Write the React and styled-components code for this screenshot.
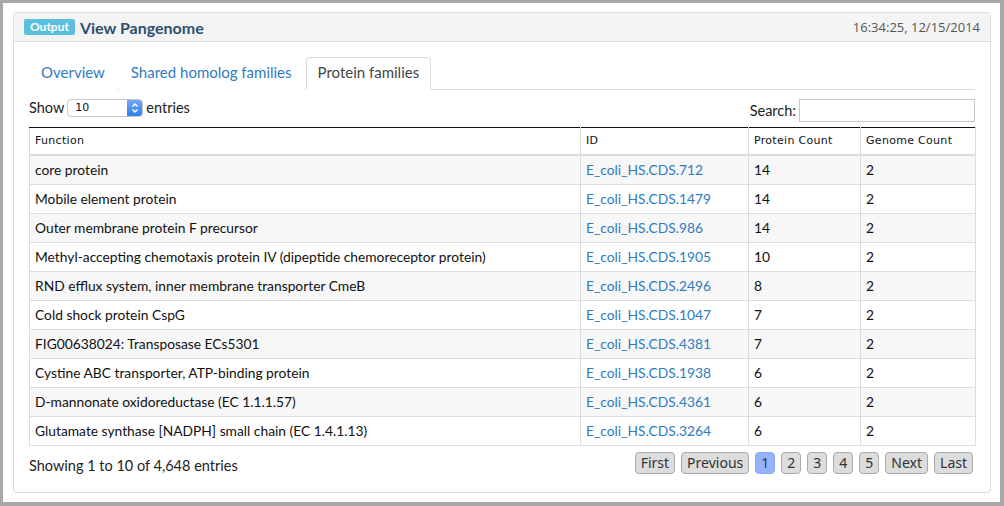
import React from 'react'
import styled, { createGlobalStyle } from 'styled-components'

const GlobalStyle = createGlobalStyle`
  html, body {
    margin: 0;
    padding: 0;
    background: #fff;
  }
  body {
    font-family: Lato, "Open Sans", sans-serif;
    color: #222;
  }
`

const rows = [
  { fn: 'core protein', id: 'E_coli_HS.CDS.712', proteins: 14, genomes: 2 },
  { fn: 'Mobile element protein', id: 'E_coli_HS.CDS.1479', proteins: 14, genomes: 2 },
  { fn: 'Outer membrane protein F precursor', id: 'E_coli_HS.CDS.986', proteins: 14, genomes: 2 },
  { fn: 'Methyl-accepting chemotaxis protein IV (dipeptide chemoreceptor protein)', id: 'E_coli_HS.CDS.1905', proteins: 10, genomes: 2 },
  { fn: 'RND efflux system, inner membrane transporter CmeB', id: 'E_coli_HS.CDS.2496', proteins: 8, genomes: 2 },
  { fn: 'Cold shock protein CspG', id: 'E_coli_HS.CDS.1047', proteins: 7, genomes: 2 },
  { fn: 'FIG00638024: Transposase ECs5301', id: 'E_coli_HS.CDS.4381', proteins: 7, genomes: 2 },
  { fn: 'Cystine ABC transporter, ATP-binding protein', id: 'E_coli_HS.CDS.1938', proteins: 6, genomes: 2 },
  { fn: 'D-mannonate oxidoreductase (EC 1.1.1.57)', id: 'E_coli_HS.CDS.4361', proteins: 6, genomes: 2 },
  { fn: 'Glutamate synthase [NADPH] small chain (EC 1.4.1.13)', id: 'E_coli_HS.CDS.3264', proteins: 6, genomes: 2 },
]

const pages = ['First', 'Previous', '1', '2', '3', '4', '5', 'Next', 'Last']

const Window = styled.div`
  box-sizing: border-box;
  width: 1004px;
  height: 506px;
  border: 3px solid #a8a8a8;
  border-right-width: 4px;
  border-bottom-width: 4px;
  padding: 9px 9px 9px 10px;
`

const Panel = styled.div`
  box-sizing: border-box;
  width: 978px;
  height: 481px;
  border: 1px solid #dcdcdc;
  border-radius: 4px;
  background: #fff;
`

const PanelHeader = styled.div`
  height: 28px;
  display: flex;
  align-items: center;
  justify-content: space-between;
  padding: 0 10px;
  background: #f4f4f4;
  border-bottom: 1px solid #dcdcdc;
  border-radius: 4px 4px 0 0;
`

const Title = styled.div`
  display: flex;
  align-items: center;
  gap: 5px;
  font-weight: 700;
  font-size: 16px;
  color: #2c4f70;
`

const Label = styled.span`
  display: inline-block;
  background: #5bc0de;
  color: #fff;
  font-size: 12px;
  font-weight: 700;
  line-height: 16px;
  padding: 0 6px;
  border-radius: 2px;
`

const Stamp = styled.div`
  font-family: "Open Sans", sans-serif;
  font-size: 13px;
  color: #555;
`

const Body = styled.div`
  padding: 15px 15px 0 15px;
`

const Tabs = styled.div`
  display: flex;
  height: 32px;
  border-bottom: 1px solid #dcdcdc;
`

const Tab = styled.div`
  box-sizing: border-box;
  display: flex;
  align-items: center;
  height: 33px;
  padding: 0 11px 3px;
  margin-right: 2px;
  font-size: 15px;
  color: ${p => (p.$active ? '#444' : '#2e7bbf')};
  background: #fff;
  border: 1px solid ${p => (p.$active ? '#dcdcdc' : 'transparent')};
  border-bottom-color: ${p => (p.$active ? '#fff' : 'transparent')};
  border-radius: 4px 4px 0 0;
`

const Controls = styled.div`
  display: flex;
  justify-content: space-between;
  align-items: flex-start;
  margin-top: 9px;
  height: 23px;
  font-size: 14.5px;
`

const Length = styled.div`
  display: flex;
  align-items: center;
  gap: 3px;
  height: 17px;
`

const Select = styled.div`
  box-sizing: border-box;
  display: flex;
  align-items: center;
  width: 76px;
  height: 18px;
  border: 1px solid #c8c8c8;
  border-radius: 4px;
  overflow: hidden;
  font-family: "DejaVu Sans", sans-serif;
  font-size: 11px;
  color: #111;
  background: #fff;
`

const SelectValue = styled.span`
  flex: 1;
  padding-left: 7px;
`

const Stepper = styled.span`
  display: flex;
  align-items: center;
  justify-content: center;
  width: 15px;
  height: 100%;
  background: linear-gradient(#6fa9f6, #2f7ef0);
`

const SearchBox = styled.label`
  display: flex;
  align-items: center;
  gap: 3px;
`

const SearchInput = styled.input`
  box-sizing: border-box;
  width: 176px;
  height: 23px;
  border: 1px solid #c8c8c8;
  margin: 0;
  padding: 0 4px;
`

const Table = styled.table`
  width: 946px;
  margin-top: 5px;
  border-collapse: collapse;
  table-layout: fixed;
`

const Th = styled.th`
  box-sizing: border-box;
  height: 27px;
  padding: 0 5px;
  text-align: left;
  font-family: "DejaVu Sans", sans-serif;
  font-weight: 400;
  font-size: 11px;
  letter-spacing: 0.3px;
  color: #111;
  border-top: 1px solid #111;
  border-bottom: 2px solid #dcdcdc;
  border-left: 1px solid #dcdcdc;
  border-right: 1px solid #dcdcdc;
  width: ${p => p.$w}px;
`

const Tr = styled.tr`
  background: ${p => (p.$odd ? '#f7f7f7' : '#fff')};
`

const Td = styled.td`
  height: 28px;
  padding: 0 5px;
  font-size: 13.8px;
  color: #111;
  border: 1px solid #dcdcdc;
  white-space: nowrap;
  overflow: hidden;
`

const IdLink = styled.a`
  color: #2e7bbf;
  text-decoration: none;
`

const Footer = styled.div`
  display: flex;
  justify-content: space-between;
  align-items: center;
  margin-top: 6px;
  padding-right: 2px;
  height: 22px;
  font-size: 14.5px;
`

const Summary = styled.span`
  padding-top: 6px;
`

const Pager = styled.div`
  display: flex;
  gap: 6px;
`

const PageButton = styled.span`
  box-sizing: border-box;
  display: flex;
  align-items: center;
  justify-content: center;
  height: 22px;
  min-width: 18px;
  padding: 0 5px;
  font-family: "Noto Sans", sans-serif;
  font-size: 14px;
  color: #333;
  background: ${p => (p.$current ? '#94b3fb' : '#ddd')};
  border: 1px solid ${p => (p.$current ? '#8ea9ea' : '#aaa')};
  border-radius: 4px;
`

const Chevrons = () => (
  <svg width="8" height="12" viewBox="0 0 8 12">
    <path d="M1.5 4.5 L4 2 L6.5 4.5 M1.5 7.5 L4 10 L6.5 7.5" fill="none" stroke="#fff" strokeWidth="1.5" />
  </svg>
)

export default function App() {
  return (
    <>
      <GlobalStyle />
      <Window>
        <Panel>
          <PanelHeader>
            <Title>
              <Label>Output</Label>
              View Pangenome
            </Title>
            <Stamp>16:34:25, 12/15/2014</Stamp>
          </PanelHeader>
          <Body>
            <Tabs>
              <Tab>Overview</Tab>
              <Tab>Shared homolog families</Tab>
              <Tab $active>Protein families</Tab>
            </Tabs>
            <Controls>
              <Length>
                Show
                <Select>
                  <SelectValue>10</SelectValue>
                  <Stepper><Chevrons /></Stepper>
                </Select>
                entries
              </Length>
              <SearchBox>
                Search:
                <SearchInput type="text" />
              </SearchBox>
            </Controls>
            <Table>
              <thead>
                <tr>
                  <Th $w={551}>Function</Th>
                  <Th $w={168}>ID</Th>
                  <Th $w={112}>Protein Count</Th>
                  <Th $w={115}>Genome Count</Th>
                </tr>
              </thead>
              <tbody>
                {rows.map((row, i) => (
                  <Tr key={row.id} $odd={i % 2 === 0}>
                    <Td>{row.fn}</Td>
                    <Td><IdLink href="#">{row.id}</IdLink></Td>
                    <Td>{row.proteins}</Td>
                    <Td>{row.genomes}</Td>
                  </Tr>
                ))}
              </tbody>
            </Table>
            <Footer>
              <Summary>Showing 1 to 10 of 4,648 entries</Summary>
              <Pager>
                {pages.map(p => (
                  <PageButton key={p} $current={p === '1'}>{p}</PageButton>
                ))}
              </Pager>
            </Footer>
          </Body>
        </Panel>
      </Window>
    </>
  )
}
